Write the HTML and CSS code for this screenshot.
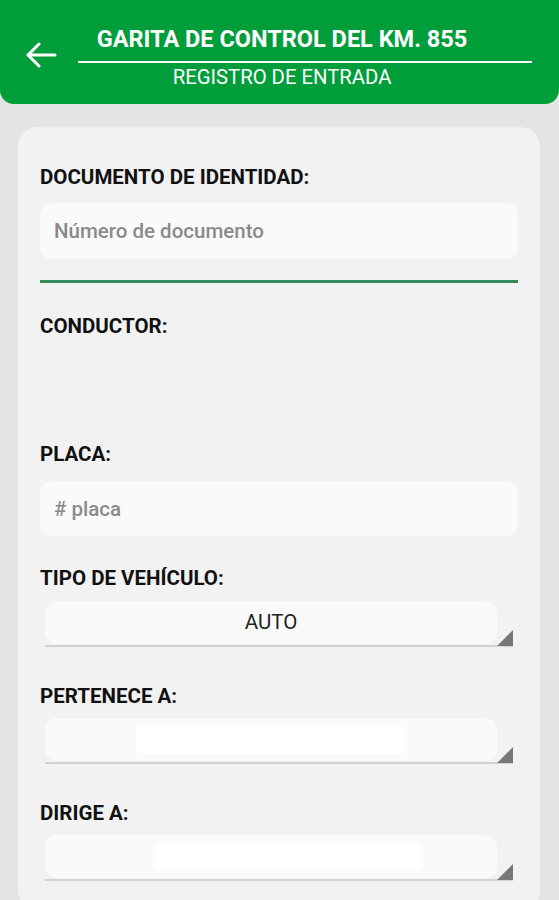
FILE: index.html
```html
<!DOCTYPE html>
<html lang="es">
<head>
    <meta charset="UTF-8">
    <meta name="viewport" content="width=device-width, initial-scale=1.0">
    <title>Registro de entrada</title>
    <link rel="stylesheet" href="styles.css">
</head>
<body>
    <header class="top-bar">
        <button class="back-btn" type="button" aria-label="Volver">
            <svg width="32" height="26" viewBox="0 0 32 26">
                <path d="M30 13H3M14 2L3 13L14 24" fill="none" stroke="#fff" stroke-width="3" stroke-linecap="round" stroke-linejoin="round"/>
            </svg>
        </button>
        <div class="top-titles">
            <h1 class="top-title">GARITA DE CONTROL DEL KM. 855</h1>
            <div class="top-sub">REGISTRO DE ENTRADA</div>
        </div>
    </header>

    <main class="card">
        <label class="field-label lbl-doc" for="doc">DOCUMENTO DE IDENTIDAD:</label>
        <input class="text-input input-doc" type="text" id="doc" placeholder="Número de documento">
        <div class="divider"></div>

        <div class="field-label lbl-driver">CONDUCTOR:</div>
        <div class="driver-value"></div>

        <label class="field-label" for="placa">PLACA:</label>
        <input class="text-input input-placa" type="text" id="placa" placeholder="# placa">

        <div class="field-label lbl-tipo">TIPO DE VEHÍCULO:</div>
        <div class="spinner spinner-first">
            <div class="spinner-box">AUTO</div>
            <span class="spinner-arrow"></span>
        </div>

        <div class="field-label lbl-spin">PERTENECE A:</div>
        <div class="spinner">
            <div class="spinner-box"><span class="blank blank-a"></span></div>
            <span class="spinner-arrow"></span>
        </div>

        <div class="field-label lbl-spin">DIRIGE A:</div>
        <div class="spinner">
            <div class="spinner-box"><span class="blank blank-b"></span></div>
            <span class="spinner-arrow"></span>
        </div>
    </main>
</body>
</html>
```
FILE: styles.css
```css
body {
    font-family: Roboto, "Liberation Sans", sans-serif;
    background-color: #e4e4e4;
    margin: 0;
    padding: 0;
}

.top-bar {
    background-color: #009e3b;
    height: 104px;
    border-radius: 0 0 14px 14px;
    display: flex;
    align-items: flex-start;
    box-sizing: border-box;
}

.back-btn {
    background: none;
    border: 0;
    padding: 0;
    margin: 42px 0 0 25px;
    width: 32px;
    height: 26px;
}

.top-titles {
    margin-left: 21px;
    width: 454px;
    color: #fff;
}

.top-title {
    margin: 0;
    padding: 25px 46px 8px 0;
    font-size: 23.5px;
    line-height: 28px;
    font-weight: 700;
    text-align: center;
    border-bottom: 2px solid #fff;
}

.top-sub {
    padding-right: 46px;
    text-align: center;
    font-size: 20.3px;
    line-height: 22px;
    margin-top: 3px;
}

.card {
    background-color: #f2f2f2;
    margin: 23px 19px 0 18px;
    border-radius: 20px;
    padding: 39px 22px 30px 22px;
    display: flex;
    flex-direction: column;
}

.field-label {
    display: block;
    font-size: 20.5px;
    line-height: 22px;
    font-weight: 700;
    color: #111;
}

.text-input {
    display: block;
    border: 0;
    outline: none;
    background-color: #fafafa;
    border-radius: 12px;
    height: 56px;
    padding: 0 14px;
    font-family: inherit;
    font-size: 20.5px;
    font-weight: 500;
    color: #333;
}

.text-input::placeholder {
    color: #8a8a8a;
}

.input-doc {
    margin-top: 15px;
}

.input-placa {
    margin-top: 16px;
    height: 55px;
}

.divider {
    height: 3px;
    background-color: #34895a;
    margin-top: 21px;
}

.lbl-driver {
    margin-top: 32px;
}

.driver-value {
    height: 106px;
}

.lbl-tipo {
    margin-top: 31px;
}

.lbl-spin {
    margin-top: 38px;
}

.spinner {
    position: relative;
    margin: 11px 5px 0 5px;
    height: 44px;
    border-bottom: 2px solid #d2d2d2;
}

.spinner-first {
    margin-top: 12px;
}

.spinner-box {
    position: relative;
    width: 452px;
    height: 43px;
    background-color: #fafafa;
    border-radius: 12px;
    font-size: 20.5px;
    line-height: 42px;
    text-align: center;
    color: #222;
}

.spinner-arrow {
    position: absolute;
    right: 0;
    bottom: -1px;
    width: 16px;
    height: 16px;
    background-color: #777;
    clip-path: polygon(100% 0, 100% 100%, 0 100%);
}

.blank {
    position: absolute;
    top: 8px;
    height: 27px;
    background-color: #fff;
    border-radius: 4px;
}

.blank-a {
    left: 91px;
    width: 269px;
}

.blank-b {
    left: 108px;
    width: 270px;
}
```
